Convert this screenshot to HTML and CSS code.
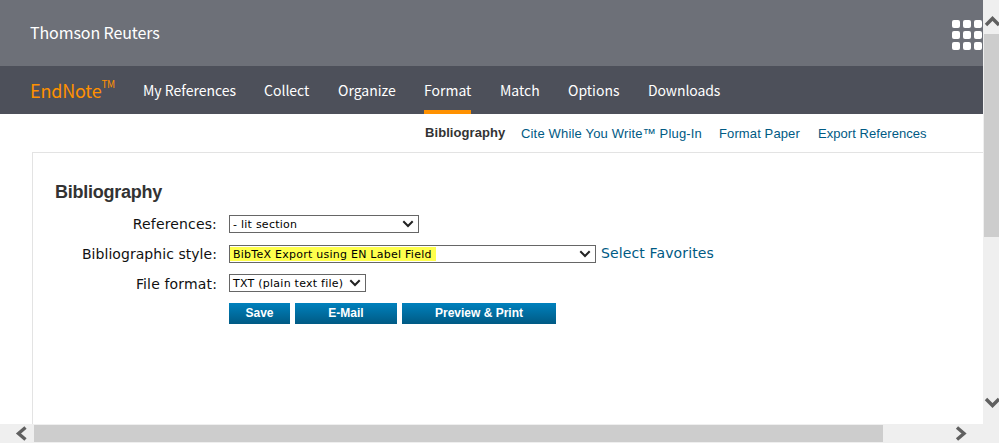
FILE: index.html
```html
<!DOCTYPE html>
<html lang="en">
<head>
<meta charset="utf-8">
<title>EndNote</title>
<link rel="stylesheet" href="styles.css">
</head>
<body>
<div class="window">
  <div class="page">
    <header class="top">
      <span class="company">Thomson Reuters</span>
      <div class="apps"><i></i><i></i><i></i><i></i><i></i><i></i><i></i><i></i><i></i></div>
    </header>
    <nav class="nav">
      <a class="brand">EndNote<span class="tm">TM</span></a>
      <a class="item refs">My References</a>
      <a class="item collect">Collect</a>
      <a class="item organize">Organize</a>
      <a class="item format active">Format</a>
      <a class="item match">Match</a>
      <a class="item options">Options</a>
      <a class="item downloads">Downloads</a>
    </nav>
    <nav class="subnav">
      <a class="current">Bibliography</a>
      <a class="cite">Cite While You Write™ Plug-In</a>
      <a class="paper">Format Paper</a>
      <a class="export">Export References</a>
    </nav>
    <main class="panel">
      <h1>Bibliography</h1>
      <div class="row">
        <label class="narrow">References:</label>
        <div class="select references"><span>- lit section</span><svg viewBox="0 0 12 8"><path d="M1.3 1.3 6 6 10.7 1.3"/></svg></div>
      </div>
      <div class="row">
        <label>Bibliographic style:</label>
        <div class="select style"><span class="marked">BibTeX Export using EN Label Field</span><svg viewBox="0 0 12 8"><path d="M1.3 1.3 6 6 10.7 1.3"/></svg></div>
        <a class="favorites">Select Favorites</a>
      </div>
      <div class="row last">
        <label class="narrow">File format:</label>
        <div class="select file"><span>TXT (plain text file)</span><svg viewBox="0 0 12 8"><path d="M1.3 1.3 6 6 10.7 1.3"/></svg></div>
      </div>
      <div class="buttons">
        <button class="save">Save</button>
        <button class="email">E-Mail</button>
        <button class="print">Preview &amp; Print</button>
      </div>
    </main>
  </div>
  <div class="vbar">
    <svg class="up" viewBox="0 0 16 34"><path d="M3 25 9.5 18.5 16 25"/></svg>
    <div class="vthumb"></div>
    <svg class="down" viewBox="0 0 16 34"><path d="M3 15 9.5 21.5 16 15"/></svg>
  </div>
  <div class="hbar">
    <svg class="left" viewBox="0 0 34 19"><path d="M25.5 3.5 18.5 9.5 25.5 15.5"/></svg>
    <div class="hthumb"></div>
    <svg class="right" viewBox="0 0 34 19"><path d="M9 3.5 16 9.5 9 15.5"/></svg>
  </div>
</div>
</body>
</html>
```
FILE: styles.css
```css
* { box-sizing: border-box; }
body { margin: 0; background: #fff; overflow: hidden; }
.window {
  width: 999px; height: 443px;
  display: grid;
  grid-template: 424px 19px / 983px 16px;
}
.page { display: flex; flex-direction: column; overflow: hidden; }
a, span, label, button { white-space: nowrap; }
.top {
  height: 66px; flex: none;
  display: flex; justify-content: space-between; align-items: center;
  padding: 0 1px 0 30px;
  background: #6d7078;
  color: #fff;
  font: 16px/24px "Noto Sans CJK SC", sans-serif;
}
.company { letter-spacing: -.1px; margin-bottom: 2px; }
.apps {
  display: grid; grid-template-columns: repeat(3, 8px);
  gap: 3px; margin-top: 3px;
}
.apps i { height: 8px; border-radius: 2px; background: #fff; }
.nav {
  height: 48px; flex: none;
  display: flex;
  padding-left: 30px;
  background: #4d505a; color: #fff;
  font: 14px/48px "Noto Sans CJK SC", sans-serif;
}
.brand { width: 113px; display: flex; color: #ff9100; font-size: 18px; line-height: 48px; letter-spacing: -.2px; }
.tm { font-size: 10px; line-height: 36px; letter-spacing: -.5px; }
.item { height: 48px; }
.refs { width: 93px; margin-right: 28px; }
.collect { width: 45px; margin-right: 29px; }
.organize { width: 58px; margin-right: 28px; }
.format { width: 47px; margin-right: 29px; }
.match { width: 39px; margin-right: 29px; }
.options { width: 51px; margin-right: 29px; }
.downloads { letter-spacing: -.1px; }
.active { border-bottom: 4px solid #ff9100; }
.subnav {
  height: 38px; flex: none;
  display: flex;
  padding-left: 425px;
  color: #005a84;
  font: 13px/39px "Liberation Sans", Arial, sans-serif;
}
.current { width: 96px; color: #333; font-weight: bold; line-height: 37px; letter-spacing: .08px; }
.cite { width: 198px; letter-spacing: .17px; }
.paper { width: 99px; letter-spacing: .12px; }
.export { letter-spacing: .06px; }
.panel {
  flex: 1; margin-left: 32px; padding: 27px 0 0 22px;
  border: solid #e3e3e3; border-width: 1px 0 0 1px;
}
h1 { margin: 0 0 5px; color: #333; font: bold 18px/24px "Liberation Sans", Arial, sans-serif; letter-spacing: -.25px; }
.row {
  display: flex; align-items: center; height: 30px;
  font: 14px/18px "DejaVu Sans", Verdana, sans-serif; color: #111;
}
.row.last { height: 28px; }
.row.last label { padding-top: 2px; }
label { width: 162px; margin-right: 12px; text-align: right; letter-spacing: .05px; }
.narrow { letter-spacing: .15px; }
.select {
  height: 18px; padding: 0 4px 0 3px;
  display: flex; justify-content: space-between; align-items: center;
  border: 1px solid #666; background: #fff; color: #000;
  font-size: 11px; line-height: 14px; letter-spacing: .25px;
}
.select span { padding-top: 1px; }
.file span { padding-top: 2px; }
.select svg { width: 12px; height: 8px; }
svg path { fill: none; stroke: #222; stroke-width: 2; }
.references { width: 190px; }
.style { width: 367px; }
.file { width: 137px; }
.select .marked { margin-left: -3px; padding: 1px 4px 0 3px; background: #ffff4d; line-height: 13px; }
.favorites { margin: -2px 0 0 5px; color: #005a84; letter-spacing: .13px; }
.buttons { display: flex; gap: 5px; margin: 6px 0 0 174px; }
button {
  height: 21px; padding: 0; border: 0;
  background: linear-gradient(#0081bd, #005a84);
  color: #fff; font: bold 12px/21px "Liberation Sans", Arial, sans-serif;
}
.save { width: 61px; }
.email { width: 102px; }
.print { width: 154px; }
.vbar {
  grid-row: 1 / 3; grid-column: 2;
  display: flex; flex-direction: column; background: #efefef;
}
.hbar { grid-row: 2; grid-column: 1; display: flex; background: #efefef; }
.vbar svg { width: 16px; height: 34px; display: block; }
.vthumb { height: 203px; margin-left: 1px; background: #cdcdcd; }
.vbar .down { margin-top: 147px; }
.hbar svg { width: 34px; height: 19px; display: block; }
.hthumb { width: 849px; height: 17px; margin-top: 1px; background: #cdcdcd; }
.hbar .right { margin-left: 65px; }
.vbar path, .hbar path { stroke: #606060; stroke-width: 3.4; }
```
